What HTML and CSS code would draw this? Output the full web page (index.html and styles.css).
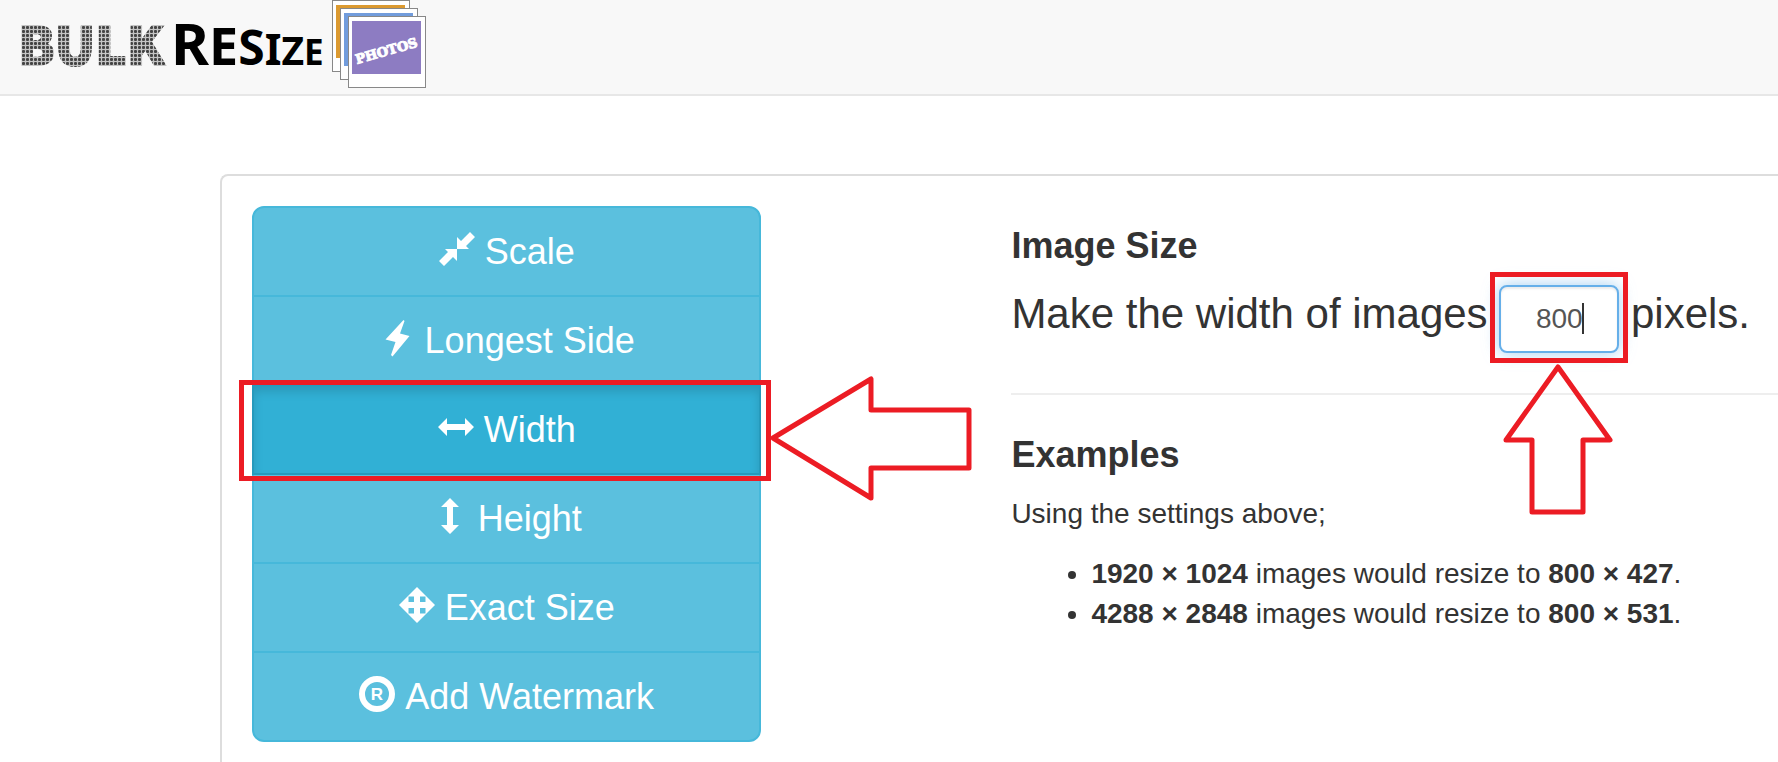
FILE: index.html
```
<!DOCTYPE html>
<html lang="en">
<head>
    <meta charset="utf-8">
    <title>Bulk Resize Photos</title>
    <link rel="stylesheet" href="styles.css">
</head>
<body>
    <header class="navbar">
        <a class="brand" href="#" aria-label="Bulk Resize Photos">
            <svg width="430" height="90" viewBox="0 0 430 90">
                <defs>
                    <pattern id="dots" x="22" y="18" width="4" height="4" patternUnits="userSpaceOnUse">
                        <rect width="4" height="4" fill="#c4c4c4"/>
                        <rect width="3" height="3" rx="1" fill="#444"/>
                    </pattern>
                </defs>
                <text class="logo-bulk" x="18" y="65" fill="url(#dots)" stroke="url(#dots)" stroke-width="2">BULK</text>
                <text class="logo-resize" x="171" y="65"><tspan font-size="58">R</tspan><tspan font-size="52">E</tspan><tspan font-size="48">S</tspan><tspan font-size="43">I</tspan><tspan font-size="39">Z</tspan><tspan font-size="35">E</tspan></text>
                <g fill="#fff" stroke="#888">
                    <rect x="332.5" y="0.5" width="77" height="71"/>
                    <rect x="336" y="5" width="69" height="53" fill="#dc9a30" stroke="none"/>
                    <rect x="340.5" y="8.5" width="77" height="71"/>
                    <rect x="344" y="13" width="69" height="53" fill="#719cdc" stroke="none"/>
                    <rect x="348.5" y="16.5" width="77" height="71"/>
                    <rect x="352" y="21" width="69" height="53" fill="#8d7cc2" stroke="none"/>
                </g>
                <text class="logo-photos" x="357" y="64" transform="rotate(-16 357 64)">PHOTOS</text>
            </svg>
        </a>
    </header>

    <main class="panel">
        <div class="modes">
            <button class="mode" type="button">
                <svg class="icon" viewBox="0 0 36 36"><path d="M18 18V6l4 4 9-9 5 5-9 9 3 3zM18 18v12l-4-4-9 9-5-5 9-9-3-3z"/></svg>
                Scale
            </button>
            <button class="mode" type="button">
                <svg class="icon" viewBox="0 0 36 36"><path d="M24.5 0 6.5 19.5l10 2.5L12 35l1.5 1.5 17-20.5-9.5-2.5L25.5 1z"/></svg>
                Longest Side
            </button>
            <div class="marked">
                <button class="mode active" type="button">
                    <svg class="icon" viewBox="0 0 36 36"><path d="M0 18l9-9v6h18V9l9 9-9 9v-6H9v6z"/></svg>
                    Width
                </button>
                <span class="outline outline-mode"></span>
                <svg class="arrow arrow-left" width="202" height="126" viewBox="0 0 202 126">
                    <path d="M2 63 100 4v31h98v58h-98v30z"/>
                </svg>
            </div>
            <button class="mode" type="button">
                <svg class="icon" viewBox="0 0 36 36"><path d="M18 0l9 9h-6v18h6l-9 9-9-9h6V9H9z"/></svg>
                Height
            </button>
            <button class="mode" type="button">
                <svg class="icon" viewBox="0 0 36 36"><path fill-rule="evenodd" d="M18 0l18 18-18 18L0 18zM9.5 9.5v5.500h5.500V9.500zM21 9.500v5.500h5.500V9.500zM9.500 21v5.500h5.500V21zM21 21v5.500h5.500V21z"/></svg>
                Exact Size
            </button>
            <button class="mode" type="button">
                <svg class="icon" viewBox="0 0 36 36"><circle cx="18" cy="18" r="15" fill="none" stroke="#fff" stroke-width="6"/><text class="reg" x="18" y="24" text-anchor="middle">R</text></svg>
                Add Watermark
            </button>
        </div>

        <section class="settings">
            <h4>Image Size</h4>
            <p class="sentence">
                <label for="width">Make the width of images</label>
                <span class="field">
                    <input id="width" type="text" value="800">
                    <span class="outline outline-field"></span>
                    <svg class="arrow arrow-up" width="112" height="154" viewBox="0 0 112 154">
                        <path d="M56 4 108 77H81v72H30V77H4z"/>
                    </svg>
                </span>
                pixels.
            </p>
            <hr>
            <h4>Examples</h4>
            <p>Using the settings above;</p>
            <ul>
                <li><strong>1920 × 1024</strong> images would resize to <strong>800 × 427</strong>.</li>
                <li><strong>4288 × 2848</strong> images would resize to <strong>800 × 531</strong>.</li>
            </ul>
        </section>
    </main>
</body>
</html>
```
FILE: styles.css
```
* {
    box-sizing: border-box;
}

body {
    margin: 0;
    font-family: "Liberation Sans", Arial, sans-serif;
    font-size: 28px;
    line-height: 40px;
    color: #333;
    background-color: #fff;
}

.navbar {
    height: 96px;
    background-color: #f8f8f8;
    border-bottom: 2px solid #e7e7e7;
}

.brand,
.brand svg {
    display: block;
}

.brand {
    width: 430px;
}

.logo-bulk {
    font: 900 53px "Noto Sans CJK SC", sans-serif;
}

.logo-resize {
    font-family: "Noto Sans", sans-serif;
    font-weight: bold;
    fill: #000;
}

.logo-photos {
    font: bold 13px "DejaVu Serif", serif;
    fill: #fff;
    stroke: #fff;
}

.panel {
    display: grid;
    grid-template-columns: minmax(0, 200fr) minmax(0, 301fr);
    column-gap: 250px;
    margin: 78px 0 0 220px;
    padding: 30px 0 20px 30px;
    border: 2px solid #ddd;
    border-right: 0;
    border-bottom: 0;
    border-top-left-radius: 8px;
}

.modes {
    display: flex;
    flex-direction: column;
}

.mode {
    display: flex;
    align-items: center;
    justify-content: center;
    gap: 10px;
    width: 100%;
    padding: 20px;
    font-family: inherit;
    font-size: 36px;
    line-height: 47px;
    color: #fff;
    background-color: #5bc0de;
    border: 2px solid #46b8da;
    cursor: pointer;
}

.modes > * + * {
    margin-top: -2px;
}

.mode:first-child {
    border-radius: 12px 12px 0 0;
}

.mode:last-child {
    border-radius: 0 0 12px 12px;
}

.marked .active {
    border-radius: 0;
    background-color: #31b0d5;
    border-color: #269abc;
    box-shadow: inset 0 6px 10px rgba(0, 0, 0, 0.125);
}

.icon {
    width: 36px;
    height: 36px;
    margin-bottom: 6px;
    fill: #fff;
    overflow: visible;
}

.reg {
    font: bold 17px "Liberation Sans", sans-serif;
}

h4 {
    margin: 20px 0 19px;
    font-size: 36px;
    line-height: 40px;
}

p {
    margin: 0 0 20px;
}

.sentence {
    margin-bottom: 40px;
    font-size: 42px;
    line-height: 46px;
}

hr {
    margin: 40px 0;
    border: 0;
    border-top: 2px solid #eee;
}

ul {
    margin: 0;
    padding-left: 80px;
}

.field input {
    width: 120px;
    padding: 12px 24px;
    font-family: inherit;
    font-size: 28px;
    line-height: 40px;
    height: 68px;
    text-align: center;
    color: #555;
    border: 2px solid #66afe9;
    border-radius: 8px;
    box-shadow: inset 0 2px 2px rgba(0, 0, 0, 0.075), 0 0 16px rgba(102, 175, 233, 0.6);
    outline: none;
}

/* red callouts */
.marked,
.field {
    position: relative;
    z-index: 1;
}

.field {
    display: inline-block;
}

/* text cursor */
.field::after {
    content: "";
    position: absolute;
    top: 18px;
    left: 83px;
    width: 2px;
    height: 31px;
    background-color: #333;
}

.outline {
    position: absolute;
    border: 5px solid #ec1c24;
    pointer-events: none;
}

.outline-mode {
    top: -4px;
    right: -10px;
    bottom: -6px;
    left: -13px;
}

.outline-field {
    top: -13px;
    right: -9px;
    bottom: -10px;
    left: -9px;
}

.arrow {
    position: absolute;
    fill: none;
    stroke: #ec1c24;
    stroke-width: 5;
    stroke-linejoin: round;
    pointer-events: none;
}

.arrow-left {
    top: -9px;
    left: calc(100% + 10px);
}

.arrow-up {
    top: 78px;
    left: 3px;
}
```
